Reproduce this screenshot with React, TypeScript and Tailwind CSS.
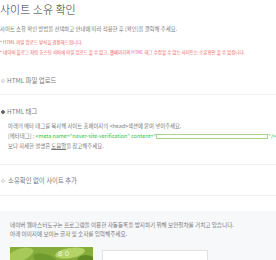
import React from "react";

const font = { fontFamily: '"Noto Sans CJK KR", "Noto Sans", sans-serif' };

function Radio({ checked }: { checked?: boolean }) {
  return (
    <span
      className={
        "inline-block w-[4px] h-[4px] rounded-full border-[0.5px] shrink-0 " +
        (checked ? "border-[#666] bg-[#666]" : "border-[#d4d4d4] bg-[#f4f4f4]")
      }
    />
  );
}

function Captcha() {
  return (
    <svg width="83" height="20" viewBox="0 0 83 20" className="block">
      <rect width="83" height="20" fill="#86ad3c" />
      <ellipse cx="10" cy="8" rx="14" ry="6" fill="#a6c95a" transform="rotate(-20 10 8)" />
      <ellipse cx="35" cy="12" rx="12" ry="5" fill="#6f9a2e" transform="rotate(15 35 12)" />
      <ellipse cx="60" cy="6" rx="15" ry="5" fill="#b4d468" transform="rotate(-10 60 6)" />
      <ellipse cx="76" cy="14" rx="9" ry="6" fill="#5f8a24" />
      <text x="48" y="9" fontSize="8" fill="#eef6de" fontFamily="Liberation Sans, sans-serif">
        8 0
      </text>
    </svg>
  );
}

export default function App() {
  return (
    <div className="w-[276px] h-[260px] overflow-hidden bg-white text-[#777]" style={font}>
      <h1 className="text-[11px] leading-[18px] text-[#333] font-light">사이트 소유 확인</h1>

      <p className="mt-[6px] text-[5.4px] leading-[10px]">
        사이트 소유 확인 방법을 선택하고 안내에 따라 적용한 후 [확인]을 클릭해 주세요.
      </p>
      <div className="mt-[3px] text-[4.5px] leading-[10px] text-[#f25a5a] whitespace-nowrap">
        <p>* HTML 파일 업로드 방식을 권장해드립니다.</p>
        <p>* 네이버 블로그 처럼 호스팅 서버에 파일 업로드 할 수 없고, 웹페이지의 HTML 태그 수정할 수 없는 사이트는 소유확인 할 수 없습니다.</p>
      </div>

      <div className="pt-[19px] pb-[8px] border-b border-[#f3f3f3]">
        <label className="flex items-center gap-[2px] pl-[1px] text-[6.4px] leading-[10px] text-[#7a7a7a]">
          <Radio />
          HTML 파일 업로드
        </label>
      </div>

      <div className="pt-[12px] pb-[13px] border-b border-[#f3f3f3]">
        <label className="flex items-center gap-[2px] pl-[1px] text-[6.4px] leading-[10px] text-[#7a7a7a]">
          <Radio checked />
          HTML 태그
        </label>
        <div className="pl-[8px] mt-[4px] text-[5.4px] leading-[10px] whitespace-nowrap">
          <p>아래의 메타 태그를 복사해 사이트 홈페이지의 &lt;head&gt;섹션에 붙여 넣어주세요.</p>
          <p className="flex items-center">
            <span>[메타태그] :&nbsp;</span>
            <span className="text-[#2cbf3c]">&lt;meta name="naver-site-verification" content="</span>
            <span className="inline-block w-[116px] h-[5px] border-[0.5px] border-[#a9d68f] bg-white" />
            <span className="text-[#2cbf3c]">"/&gt;</span>
          </p>
          <p>
            보다 자세한 설명은 <span className="underline">도움말</span>을 참고해주세요.
          </p>
        </div>
      </div>

      <div className="pt-[11px] pb-[9px] border-b border-[#f3f3f3]">
        <label className="flex items-center gap-[3px] pl-[1px] text-[6.4px] leading-[10px] text-[#7a7a7a]">
          <Radio />
          소유확인 없이 사이트 추가
        </label>
      </div>

      <div className="mt-[15px] bg-[#f7f8fa] pt-[10px] pl-[10px] h-[60px]">
        <div className="text-[5.6px] leading-[9px] whitespace-nowrap">
          <p>네이버 웹마스터도구는 프로그램을 이용한 자동등록을 방지하기 위해 보안절차를 거치고 있습니다.</p>
          <p>아래 이미지에 보이는 글자 및 숫자를 입력해주세요.</p>
        </div>
        <div className="mt-[8px] flex items-start gap-[9px]">
          <Captcha />
          <div className="mt-[3px] w-[106px] h-[16px] bg-white border border-[#e2e2e2]" />
        </div>
      </div>
    </div>
  );
}
